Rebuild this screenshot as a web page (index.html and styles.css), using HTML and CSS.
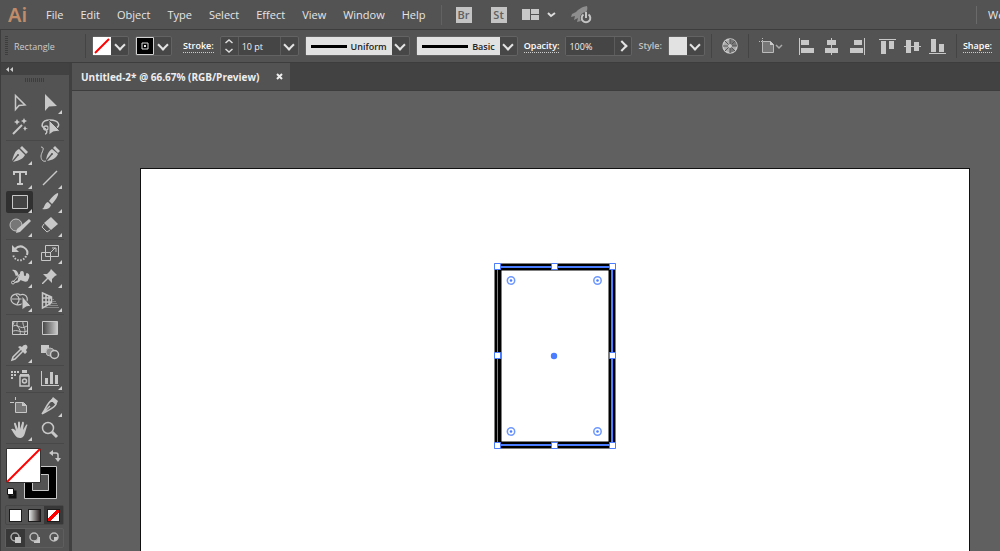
FILE: index.html
```html
<!DOCTYPE html>
<html lang="en">
  <head>
    <meta charset="UTF-8" />
    <meta name="viewport" content="width=device-width, initial-scale=1.0" />
    <title>Untitled-2* @ 66.67% (RGB/Preview)</title>
    <link rel="stylesheet" href="styles.css">
  </head>
  <body>
    <header class="menubar">
      <div class="logo">Ai</div>
      <nav class="menu">
        <button type="button">File</button>
        <button type="button">Edit</button>
        <button type="button">Object</button>
        <button type="button">Type</button>
        <button type="button">Select</button>
        <button type="button">Effect</button>
        <button type="button">View</button>
        <button type="button">Window</button>
        <button type="button">Help</button>
      </nav>
      <div class="apps">
        <button type="button" class="app">Br</button>
        <button type="button" class="app">St</button>
        <button type="button" class="icon-btn" aria-label="Arrange documents">
          <svg width="34" height="12" viewBox="0 0 34 12"><path fill="#c8c8c8" d="M0 0h8v11H0zM9 0h8v5H9zM9 6h8v5H9z"/><path d="M26 4l3 3 4-3" fill="none" stroke="#ddd" stroke-width="2"/></svg>
        </button>
        <button type="button" class="icon-btn" aria-label="GPU performance">
          <svg width="22" height="18" viewBox="0 0 22 18"><path fill="#8e8e8e" d="M16 0c-6 1-9 4-11 6L1 8l-1 3 4-1-1 4 4-2-1 4 4-1 4-7c2-3 3-5 2-8z"/><circle cx="15" cy="12" r="6" fill="#535353"/><path d="M12.500 8.500a4.300 4.300 0 1 0 5 0M15 6v6" fill="none" stroke="#c4c4c4" stroke-width="2"/></svg>
        </button>
      </div>
      <div class="workspace">We</div>
    </header>

    <section class="controlbar">
      <div class="grip"></div>
      <div class="selection-name">Rectangle</div>
      <div class="divider"></div>
      <div class="combo">
        <button type="button" class="swatch" aria-label="Fill"><svg width="18" height="18" viewBox="0 0 18 18"><path fill="#fff" d="M0 0h18v18H0z"/><path d="M2 16L16 2" stroke="#f00" stroke-width="2"/></svg></button>
        <button type="button" class="chev" aria-label="Fill colors"></button>
      </div>
      <div class="combo">
        <button type="button" class="swatch" aria-label="Stroke color"><svg width="18" height="18" viewBox="0 0 18 18"><path d="M.5.5h17v17H.500z" stroke="#d0d0d0"/><path d="M6 6h6v6H6z" fill="none" stroke="#ddd"/><path d="M8 8h2v2H8z" fill="#eee"/></svg></button>
        <button type="button" class="chev" aria-label="Stroke colors"></button>
      </div>
      <label class="lbl lbl-stroke link" for="strokeWeight">Stroke:</label>
      <div class="combo">
        <button type="button" class="spin" aria-label="Change stroke weight"><svg width="8" height="14" viewBox="0 0 8 14"><path d="M0.500 4L4 1l3.500 3M.5 10L4 13l3.500-3" fill="none" stroke="#ddd" stroke-width="1.500"/></svg></button>
        <input type="text" id="strokeWeight" class="weight" value="10 pt" />
        <button type="button" class="chev" aria-label="Stroke weights"></button>
      </div>
      <div class="combo">
        <button type="button" class="profile"><span class="line"></span>Uniform</button>
        <button type="button" class="chev" aria-label="Width profiles"></button>
      </div>
      <div class="combo">
        <button type="button" class="profile basic"><span class="line"></span>Basic</button>
        <button type="button" class="chev" aria-label="Brushes"></button>
      </div>
      <label class="lbl link" for="opacity">Opacity:</label>
      <div class="combo">
        <input type="text" id="opacity" class="opacity" value="100%" />
        <button type="button" class="chev right" aria-label="Opacity slider"></button>
      </div>
      <label class="lbl lbl-style" for="style">Style:</label>
      <div class="combo">
        <button type="button" id="style" class="swatch light"></button>
        <button type="button" class="chev" aria-label="Graphic styles"></button>
      </div>
      <div class="divider"></div>
      <button type="button" class="icon-btn recolor" aria-label="Recolor artwork">
        <svg width="16" height="16" viewBox="0 0 16 16"><circle cx="8" cy="8" r="7" fill="#a9a9a9" stroke="#c8c8c8" stroke-width="1.500"/><path d="M8 8V1a7 7 0 0 1 7 7zM8 8l5 5-5 2z" fill="#777"/><path d="M8 1v14M1 8h14M3 3l10 10M13 3L3 13" stroke="#555"/><circle cx="8" cy="8" r="2" fill="#c8c8c8"/></svg>
      </button>
      <div class="divider"></div>
      <button type="button" class="icon-btn align-to" aria-label="Align to">
        <svg width="24" height="16" viewBox="0 0 24 16"><path d="M3.500 3.500h8l3 3v8h-11z" fill="#777" stroke="#bbb"/><path d="M11 3v4h4" fill="#ccc"/><path d="M3.500 0v3M0 3.500h3" stroke="#bbb" stroke-dasharray="1 1"/><path d="M17 7l3 3 3-3" fill="none" stroke="#aaa" stroke-width="1.500"/></svg>
      </button>
      <div class="align">
        <button type="button" class="icon-btn" aria-label="Align left"><svg width="17" height="17" viewBox="0 0 17 17"><path fill="#c8c8c8" d="M1 0h1v17H1zM3 2h8v5H3zM3 10h13v5H3z"/></svg></button>
        <button type="button" class="icon-btn" aria-label="Align center"><svg width="17" height="17" viewBox="0 0 17 17"><path fill="#c8c8c8" d="M8 0h1v17H8zM4 2h9v5H4zM2 10h13v5H2z"/></svg></button>
        <button type="button" class="icon-btn" aria-label="Align right"><svg width="17" height="17" viewBox="0 0 17 17"><path fill="#c8c8c8" d="M16 0h1v17h-1zM6 2h8v5H6zM2 10h13v5H2z"/></svg></button>
      </div>
      <div class="align">
        <button type="button" class="icon-btn" aria-label="Align top"><svg width="17" height="17" viewBox="0 0 17 17"><path fill="#c8c8c8" d="M0 1h17v1H0zM2 3h5v13H2zM10 3h5v8h-5z"/></svg></button>
        <button type="button" class="icon-btn" aria-label="Align middle"><svg width="17" height="17" viewBox="0 0 17 17"><path fill="#c8c8c8" d="M0 8h17v1H0zM2 2h5v13H2zM10 4h5v9h-5z"/></svg></button>
        <button type="button" class="icon-btn" aria-label="Align bottom"><svg width="17" height="17" viewBox="0 0 17 17"><path fill="#c8c8c8" d="M0 15h17v1H0zM2 1h5v13H2zM10 6h5v8h-5z"/></svg></button>
      </div>
      <div class="divider"></div>
      <button type="button" class="lbl link">Shape:</button>
    </section>

    <main class="workarea">
      <aside class="toolbox">
        <button type="button" class="collapse" aria-label="Collapse toolbar"><svg width="7" height="5" viewBox="0 0 7 5"><path fill="#ccc" d="M3 0v5L0 2.500zM7 0v5L4 2.500z"/></svg></button>
        <div class="tool-grip"></div>

        <div class="tools">
          <button type="button" class="tool" aria-label="Selection"><svg viewBox="0 0 18 18"><path class="s" stroke-width="1.500" d="M4.500 1.500v14l3.500-4 6-.500z"/></svg></button>
          <button type="button" class="tool more" aria-label="Direct selection"><svg viewBox="0 0 18 18"><path class="f" d="M4 0v17l4-4.500 8-.500z"/></svg></button>
          <button type="button" class="tool" aria-label="Magic wand"><svg viewBox="0 0 18 18"><path class="s" stroke-width="2" d="M2 16L11 7"/><path class="f" d="M6 1l1 2 2 1-2 1-1 2-1-2-2-1 2-1zM13 0l1 2 2 1-2 1-1 2-1-2-2-1 2-1zM14 8l1 2 2 0-2 1-1 2-1-2-1-1 1 0z"/></svg></button>
          <button type="button" class="tool" aria-label="Lasso"><svg viewBox="0 0 18 18"><path class="s" stroke-width="1.500" d="M5 11C-1 9 0 2 9 2s11 6 6 8M5 8c-3 0-3 4 0 4s3-4 0-4M5 12c2 2 0 4-1 4"/><path d="M8 2v15l4-3 7-1z" fill="#c8c8c8" stroke="#535353"/></svg></button>
        </div>
        <div class="tools">
          <button type="button" class="tool more" aria-label="Pen"><svg viewBox="0 0 18 18"><path class="f" d="M11 1l6 6-2 2-6-6zM8 4l6 6c-2 4-5 5-12 7L7 11a1 1 0 1 0-1-1L1 16C3 9 4 6 8 4z"/></svg></button>
          <button type="button" class="tool" aria-label="Curvature"><svg viewBox="0 0 18 18"><path class="f" d="M14 1l5 5-2 2-5-5zM11 4l6 5c-2 4-5 6-11 7l5-6a1 1 0 1 0-1-1l-5 6c1-6 3-9 6-11z"/><path class="s" d="M0 2c5 0 0 6 0 9 0 4 2 6 5 5"/></svg></button>
          <button type="button" class="tool more" aria-label="Type"><svg viewBox="0 0 18 18"><path class="f" d="M2 2h14v4h-2V4h-4v10h2v2H6v-2h2V4H4v2H2z"/></svg></button>
          <button type="button" class="tool more" aria-label="Line"><svg viewBox="0 0 18 18"><path class="s" stroke-width="1.500" d="M2 16L16 2"/></svg></button>
          <button type="button" class="tool more active" aria-label="Rectangle"><svg viewBox="0 0 18 18"><path d="M1.500 2.500h15v13h-15z" fill="#444" stroke="#c8c8c8"/></svg></button>
          <button type="button" class="tool more" aria-label="Paintbrush"><svg viewBox="0 0 18 18"><path class="f" d="M17 0c1 2-3 8-6 11L8 8c3-4 7-8 9-8zM7 9l3 3c-1 4-5 5-9 4 3-1 2-6 6-7z"/></svg></button>
          <button type="button" class="tool more" aria-label="Shaper"><svg viewBox="0 0 18 18"><circle cx="5" cy="8" r="6" fill="#777" stroke="#c0c0c0"/><path class="f" d="M18 2l2 2L9 15l-4 1 1-4z"/></svg></button>
          <button type="button" class="tool more" aria-label="Eraser"><svg viewBox="0 0 18 18"><path class="f" d="M10 0l7 7-7 6-7-7z"/><path class="s" d="M3 7l-2 3 5 5 3-2"/></svg></button>
        </div>
        <div class="tools">
          <button type="button" class="tool more" aria-label="Rotate"><svg viewBox="0 0 18 18"><path class="s" stroke-width="2" d="M4 5c6-6 14 0 12 6"/><path class="s" stroke-width="2" stroke-dasharray="1.500 1.500" d="M15 12c-2 6-12 6-13-2"/><path class="f" d="M1 1v7h7z"/></svg></button>
          <button type="button" class="tool more" aria-label="Scale"><svg viewBox="0 0 18 18"><path class="s" d="M4.500 1.500h13v11h-13zM.5 8.500h9v8h-9zM9 9l5-5M11 4h4v4"/></svg></button>
          <button type="button" class="tool more" aria-label="Width"><svg viewBox="0 0 18 18"><path class="f" d="M1 2c5-1 6 3 7 6 2-2 0-5 3-5s1 5 3 5 0-3 2-3c3 1 3 4 1 7 0 2-3 2-5 1-2 0-2-2-3 0-2 2-4 2-6 2l2-2c2 0 2-1 2-3-3 0-2-6-6-8z"/><circle cx="6" cy="9" r="1.500" fill="#535353"/><path class="s" d="M2 14l9-10"/><circle class="s" cx="2" cy="14.500" r="1.500"/></svg></button>
          <button type="button" class="tool more" aria-label="Puppet warp"><svg viewBox="0 0 18 18"><path class="f" d="M10 1l6 6-2 1-3 3 0 4-4-4-5 5-1 0 0-1 5-5-4-4 4 0 3-3z"/></svg></button>
          <button type="button" class="tool more" aria-label="Shape builder"><svg viewBox="0 0 18 18"><path class="s" stroke-width="1.200" d="M0 7c0-5 7-6 9-4 8-3 10 8 3 8-4 4-12 1-12-4zM1 7h10M5 3c4 2 4 6 1 9"/><path d="M11 4v14l4-3 5-1z" fill="#c8c8c8" stroke="#535353"/></svg></button>
          <button type="button" class="tool more" aria-label="Perspective grid"><svg viewBox="0 0 18 18"><path class="s" stroke-width="1.500" d="M1.500 1v15l9-5V5zM5 3v11M8 4v8M1 6h9M1 10h9"/><path d="M11 7.500h2M11 9.500h4M10 11.500h6M7 13.500h10M4 15.500h14" stroke="#888"/></svg></button>
        </div>
        <div class="tools">
          <button type="button" class="tool" aria-label="Mesh"><svg viewBox="0 0 18 18"><path class="s" d="M1.500 2.500h15v13h-15zM7 2c-4 5 4 7 2 14M12 2c-1 5 4 7 1 14M1 8c5-5 8 4 15-1M1 13c4-4 10 2 15-1M3 2c0 3-1 4-2 5"/></svg></button>
          <button type="button" class="tool" aria-label="Gradient"><svg viewBox="0 0 18 18"><defs><linearGradient id="g1"><stop stop-color="#444"/><stop offset="1" stop-color="#ccc"/></linearGradient></defs><path d="M1.500 2.500h15v13h-15z" fill="url(#g1)" stroke="#c8c8c8"/></svg></button>
          <button type="button" class="tool more" aria-label="Eyedropper"><svg viewBox="0 0 18 18"><path class="s" stroke-width="1.500" d="M10 6l-8 8-1 3 3-1 8-8"/><path class="f" d="M9 3l2 1c3-5 8-1 4 3l1 2-2 2-7-7z"/></svg></button>
          <button type="button" class="tool" aria-label="Blend"><svg viewBox="0 0 18 18"><path class="f" d="M0 2h8v8H0z"/><circle cx="9" cy="9" r="4" fill="#888" stroke="#bbb"/><circle cx="13.500" cy="11.500" r="4" fill="#535353" stroke="#c8c8c8" stroke-width="1.500"/></svg></button>
        </div>
        <div class="tools">
          <button type="button" class="tool more" aria-label="Symbol sprayer"><svg viewBox="0 0 18 18"><path class="f" d="M0 1h2v2H0zM3 1h2v2H3zM6 1h2v2H6zM0 4h2v2H0zM3 4h2v2H3zM0 7h2v2H0zM11 0h5v3h-5zM9 4h9v2H9z"/><path class="s" stroke-width="1.500" d="M9 6h9v10H9z"/><circle class="s" cx="13.500" cy="11" r="2" stroke-width="1.500"/></svg></button>
          <button type="button" class="tool more" aria-label="Column graph"><svg viewBox="0 0 18 18"><path class="f" d="M0 1h1v14h17v1H0zM4 8h3v6H4zM9 2h3v12H9zM14 5h3v9h-3z"/></svg></button>
        </div>
        <div class="tools">
          <button type="button" class="tool" aria-label="Artboard"><svg viewBox="0 0 18 18"><path d="M4.500 5.500h8l3 3v7h-11z" fill="#777" stroke="#c8c8c8"/><path class="f" d="M11 5v4h5z"/><path class="s" d="M4.500 0v3M-1 5.500h4"/></svg></button>
          <button type="button" class="tool more" aria-label="Slice"><svg viewBox="0 0 18 18"><path class="s" stroke-width="1.500" d="M11 3l4 4c-1 4-8 6-14 10C5 12 6 6 11 3zM1 17l8-8"/><path class="f" d="M12 0l5 4-2 4-5-5z"/></svg></button>
          <button type="button" class="tool more" aria-label="Hand"><svg viewBox="0 0 18 18"><path class="f" d="M1 8c1-1 3 1 4 2L3 3c0-2 2-1 2 0l2 5V2c0-2 2-2 2 0v6l2-6c0-2 2-1 2 0l-1 7 3-5c1-1 2 0 1 1l-2 7c-1 4-3 5-5 5-4 0-5-3-9-9z"/></svg></button>
          <button type="button" class="tool" aria-label="Zoom"><svg viewBox="0 0 18 18"><circle class="s" cx="7" cy="7" r="5.500" stroke-width="1.500"/><path class="s" stroke-width="3" d="M11 11l5 5"/></svg></button>
        </div>

        <div class="fill-stroke">
          <svg width="58" height="54" viewBox="0 0 58 54">
            <path d="M18.500 18.500h32v32h-32z" fill="#000" stroke="#c8c8c8"/>
            <path d="M26.500 26.500h16v16h-16z" fill="#535353" stroke="#c8c8c8"/>
            <path d="M.5.5h34v34H.500z" fill="#fff" stroke="#333"/>
            <path d="M1 34L34 1" stroke="#f00" stroke-width="2"/>
            <path d="M46 5h4q2 0 2 2v4" fill="none" stroke="#c8c8c8" stroke-width="1.500"/>
            <path d="M47 2v6l-4-3zM49 10h6l-3 4z" fill="#c8c8c8"/>
            <path d="M5 44h4v5H4v-3" fill="none" stroke="#111" stroke-width="3"/>
            <path d="M1.500 40.500h6v6h-6z" fill="#fff" stroke="#111"/>
          </svg>
        </div>
        <div class="modes">
          <button type="button" aria-label="Color"><span class="chip"></span></button>
          <button type="button" aria-label="Gradient fill"><span class="chip grad"></span></button>
          <button type="button" class="on" aria-label="None"><span class="chip none"></span></button>
        </div>
        <div class="modes draw">
          <button type="button" class="on" aria-label="Draw normal"><svg width="12" height="12" viewBox="0 0 12 12"><circle cx="5" cy="5" r="4" fill="none" stroke="#aaa" stroke-width="1.500"/><path fill="#c8c8c8" d="M5 5h6v6H5z"/></svg></button>
          <button type="button" aria-label="Draw behind"><svg width="12" height="12" viewBox="0 0 12 12"><path fill="#c8c8c8" d="M5 5h6v6H5z"/><circle cx="5" cy="5" r="4" fill="#535353" stroke="#bbb" stroke-width="1.500"/></svg></button>
          <button type="button" aria-label="Draw inside"><svg width="12" height="12" viewBox="0 0 12 12"><circle cx="6" cy="5" r="4" fill="none" stroke="#bbb" stroke-width="1.500"/><path fill="#c8c8c8" d="M6 5h4l-1 3-3 1z"/></svg></button>
        </div>
      </aside>

      <section class="document">
        <div class="tabs">
          <div class="tab">
            <span class="title">Untitled-2* @ 66.67% (RGB/Preview)</span>
            <button type="button" class="close" aria-label="Close"><svg width="7" height="7" viewBox="0 0 7 7"><path d="M1 1l5 5M6 1L1 6" stroke="#eee" stroke-width="2"/></svg></button>
          </div>
        </div>
        <div class="canvas">
          <div class="artboard">
            <!-- selected rectangle with its path, handles and corner widgets -->
            <svg class="shape" width="124" height="190" viewBox="0 0 124 190">
              <path d="M6 6h114v178H6z" fill="#fff" stroke="#000" stroke-width="7"/>
              <path d="M5.500 5.500h115v179h-115z" fill="none" stroke="#4a7dff" stroke-width="1"/>
              <path d="M6 6h114M120 6v178M6 184h114" stroke="#4a7dff" stroke-width="2"/>
              <g fill="#fff" stroke="#4a7dff">
                <path d="M2.500 2.500h6v6h-6zM59.500 2.500h6v6h-6zM117.500 2.500h6v6h-6zM2.500 91.500h6v6h-6zM117.500 91.500h6v6h-6zM2.500 181.500h6v6h-6zM59.500 181.500h6v6h-6zM117.500 181.500h6v6h-6z"/>
              </g>
              <g fill="#fff" stroke="#6f98ff" stroke-width="1.500">
                <circle cx="19" cy="19.500" r="3.700"/><circle cx="105.500" cy="19.500" r="3.700"/>
                <circle cx="19" cy="170.500" r="3.700"/><circle cx="105.500" cy="170.500" r="3.700"/>
              </g>
              <g fill="#4a7dff">
                <circle cx="19" cy="19.500" r="1.300"/><circle cx="105.500" cy="19.500" r="1.300"/>
                <circle cx="19" cy="170.500" r="1.300"/><circle cx="105.500" cy="170.500" r="1.300"/>
                <circle cx="62" cy="95" r="3.200"/>
              </g>
            </svg>
          </div>
        </div>
      </section>
    </main>
  </body>
</html>
```
FILE: styles.css
```css
* {
  box-sizing: border-box;
}
body {
  margin: 0;
  height: 100vh;
  display: flex;
  flex-direction: column;
  overflow: hidden;
  font-family: "Open Sans", "Noto Sans", sans-serif;
  font-size: 11px;
  color: #e6e6e6;
  background: #535353;
}
button {
  margin: 0;
  padding: 0;
  border: none;
  background: none;
  color: inherit;
  font: inherit;
  cursor: pointer;
}
svg {
  display: block;
}

/* Menu bar */
.menubar {
  display: flex;
  align-items: center;
  flex: none;
  height: 30px;
  border-bottom: 1px solid #3d3d3d;
}
.logo {
  width: 38px;
  padding-left: 8px;
  font-family: "Noto Sans", sans-serif;
  font-size: 20px;
  line-height: 28px;
  font-weight: 600;
  color: #c18c69;
}
.menu {
  display: flex;
  gap: 17px;
  padding: 0 15px 0 8px;
}
.apps {
  display: flex;
  align-items: center;
  gap: 15px;
  height: 20px;
  padding-left: 14px;
  border-left: 1px solid #626262;
}
.app {
  width: 16px;
  height: 16px;
  background: #c4c4c4;
  color: #606060;
  line-height: 16px;
  font-weight: 600;
}
.app:first-child {
  margin-right: 4px;
}
.icon-btn {
  display: flex;
  align-items: center;
  justify-content: center;
}
.workspace {
  width: 24px;
  margin-left: auto;
  padding-left: 11px;
  border-left: 1px solid #6a6a6a;
  line-height: 18px;
  overflow: hidden;
  white-space: nowrap;
}

/* Control bar */
.controlbar {
  display: flex;
  align-items: center;
  flex: none;
  gap: 6px;
  height: 33px;
  padding-left: 4px;
  border-bottom: 1px solid #3d3d3d;
  border-left: 1px solid #3d3d3d;
  font-size: 9px;
  white-space: nowrap;
}
.controlbar > * {
  flex: none;
}
.grip {
  width: 3px;
  height: 20px;
  background: repeating-linear-gradient(#3d3d3d 0 1px, #535353 1px 2px);
}
.selection-name {
  width: 65px;
  color: #ccc;
}
.divider {
  width: 1px;
  height: 24px;
  background: #444;
}
.combo {
  display: flex;
  height: 20px;
  border: 1px solid #636363;
  border-radius: 2px;
  background: #474747;
}
.swatch {
  width: 18px;
  height: 18px;
}
.light {
  background: #e2e2e2;
}
.chev {
  display: flex;
  align-items: center;
  justify-content: center;
  width: 17px;
}
.chev::before {
  content: "";
  width: 6px;
  height: 6px;
  margin-top: -3px;
  border: solid #e4e4e4;
  border-width: 0 2px 2px 0;
  transform: rotate(45deg);
}
.chev.right {
  border-left: 1px solid #5c5c5c;
}
.chev.right::before {
  margin: 0 2px 0 0;
  transform: rotate(-45deg);
}
.spin {
  display: flex;
  align-items: center;
  justify-content: center;
  width: 17px;
}
.combo input {
  min-width: 0;
  padding: 0 3px;
  border: none;
  outline: none;
  background: #454545;
  color: #f2f2f2;
  font: inherit;
}
.combo .weight {
  width: 43px;
  border: solid #5c5c5c;
  border-width: 0 1px;
}
.combo .opacity {
  width: 48px;
}
.profile {
  display: flex;
  align-items: center;
  width: 86px;
  padding: 0 5px;
  gap: 4px;
  background: #e2e2e2;
  color: #222;
  font-weight: 600;
}
.basic {
  width: 83px;
}
.line {
  flex: 1;
  height: 3px;
  background: #000;
}
.lbl {
  color: #ddd;
  line-height: 12px;
  font-weight: 600;
}
.link {
  border-bottom: 1px dotted #ccc;
  color: #fff;
}
.lbl-stroke {
  margin-left: 5px;
}
.lbl-style {
  color: #c4c4c4;
}
.recolor {
  width: 24px;
}
.align-to {
  width: 33px;
}
.align {
  display: flex;
}
.align button {
  width: 25px;
}

/* Toolbox */
.workarea {
  display: flex;
  flex: 1;
  min-height: 0;
}
.toolbox {
  flex: none;
  width: 72px;
  border-left: 1px solid #3d3d3d;
  border-right: 3px solid #404040;
}
.collapse {
  display: flex;
  align-items: center;
  width: 100%;
  height: 12px;
  padding-left: 5px;
  background: #424242;
}
.tool-grip {
  width: 19px;
  height: 4px;
  margin: 3px 0 9px 24px;
  background: repeating-linear-gradient(90deg, #3d3d3d 0 1px, #535353 1px 2px);
}
.tools {
  display: grid;
  grid-template-columns: 27px 27px;
  grid-auto-rows: 22px;
  gap: 2px 3px;
  margin: 0 5px;
  padding: 1px 0 2px;
  border-bottom: 1px solid #484848;
}
.tools + .tools {
  padding-top: 2px;
}
.tool {
  position: relative;
  display: flex;
  align-items: center;
  justify-content: center;
  border-radius: 2px;
}
.tool svg {
  width: 18px;
  height: 18px;
  overflow: visible;
}
.tool.active {
  background: #303030;
}
.tool.more::after {
  content: "";
  position: absolute;
  right: 1px;
  bottom: 0;
  border: solid transparent;
  border-width: 4px 0 0 4px;
  border-bottom: 4px solid #d0d0d0;
  border-top: 0;
}
.f {
  fill: #c8c8c8;
}
.s {
  fill: none;
  stroke: #c8c8c8;
}
.fill-stroke {
  margin: 4px 0 0 5px;
}
.modes {
  display: flex;
  width: 59px;
  height: 20px;
  margin: 3px 0 0 4px;
  border: 1px solid #484848;
  border-radius: 2px;
}
.modes button {
  display: flex;
  flex: 1;
  align-items: center;
  justify-content: center;
}
.modes .on {
  background: #383838;
}
.chip {
  width: 13px;
  height: 13px;
  border: 1px solid #1c1c1c;
  background: #fff;
}
.grad {
  background: linear-gradient(90deg, #e6e6e6, #2a2020);
}
.none {
  background: linear-gradient(135deg, #fff 38%, #f00 38% 62%, #fff 62%);
}
.draw {
  border-color: #5e5e5e;
}

/* Document window */
.document {
  display: flex;
  flex-direction: column;
  flex: 1;
  min-width: 0;
}
.tabs {
  display: flex;
  flex: none;
  height: 28px;
  border-bottom: 1px solid #3d3d3d;
  background: #424242;
}
.tab {
  display: flex;
  align-items: center;
  gap: 17px;
  padding: 0 7px 0 9px;
  background: #535353;
  font-size: 10px;
  font-weight: 700;
  color: #eee;
  white-space: nowrap;
}
.canvas {
  display: flex;
  flex: 1;
  padding: 77px 30px 0 68px;
  background: #606060;
}
.artboard {
  position: relative;
  flex: 1;
  border: 1px solid #111;
  border-bottom: none;
  background: #fff;
}
.shape {
  position: absolute;
  left: 351px;
  top: 92px;
}
```
